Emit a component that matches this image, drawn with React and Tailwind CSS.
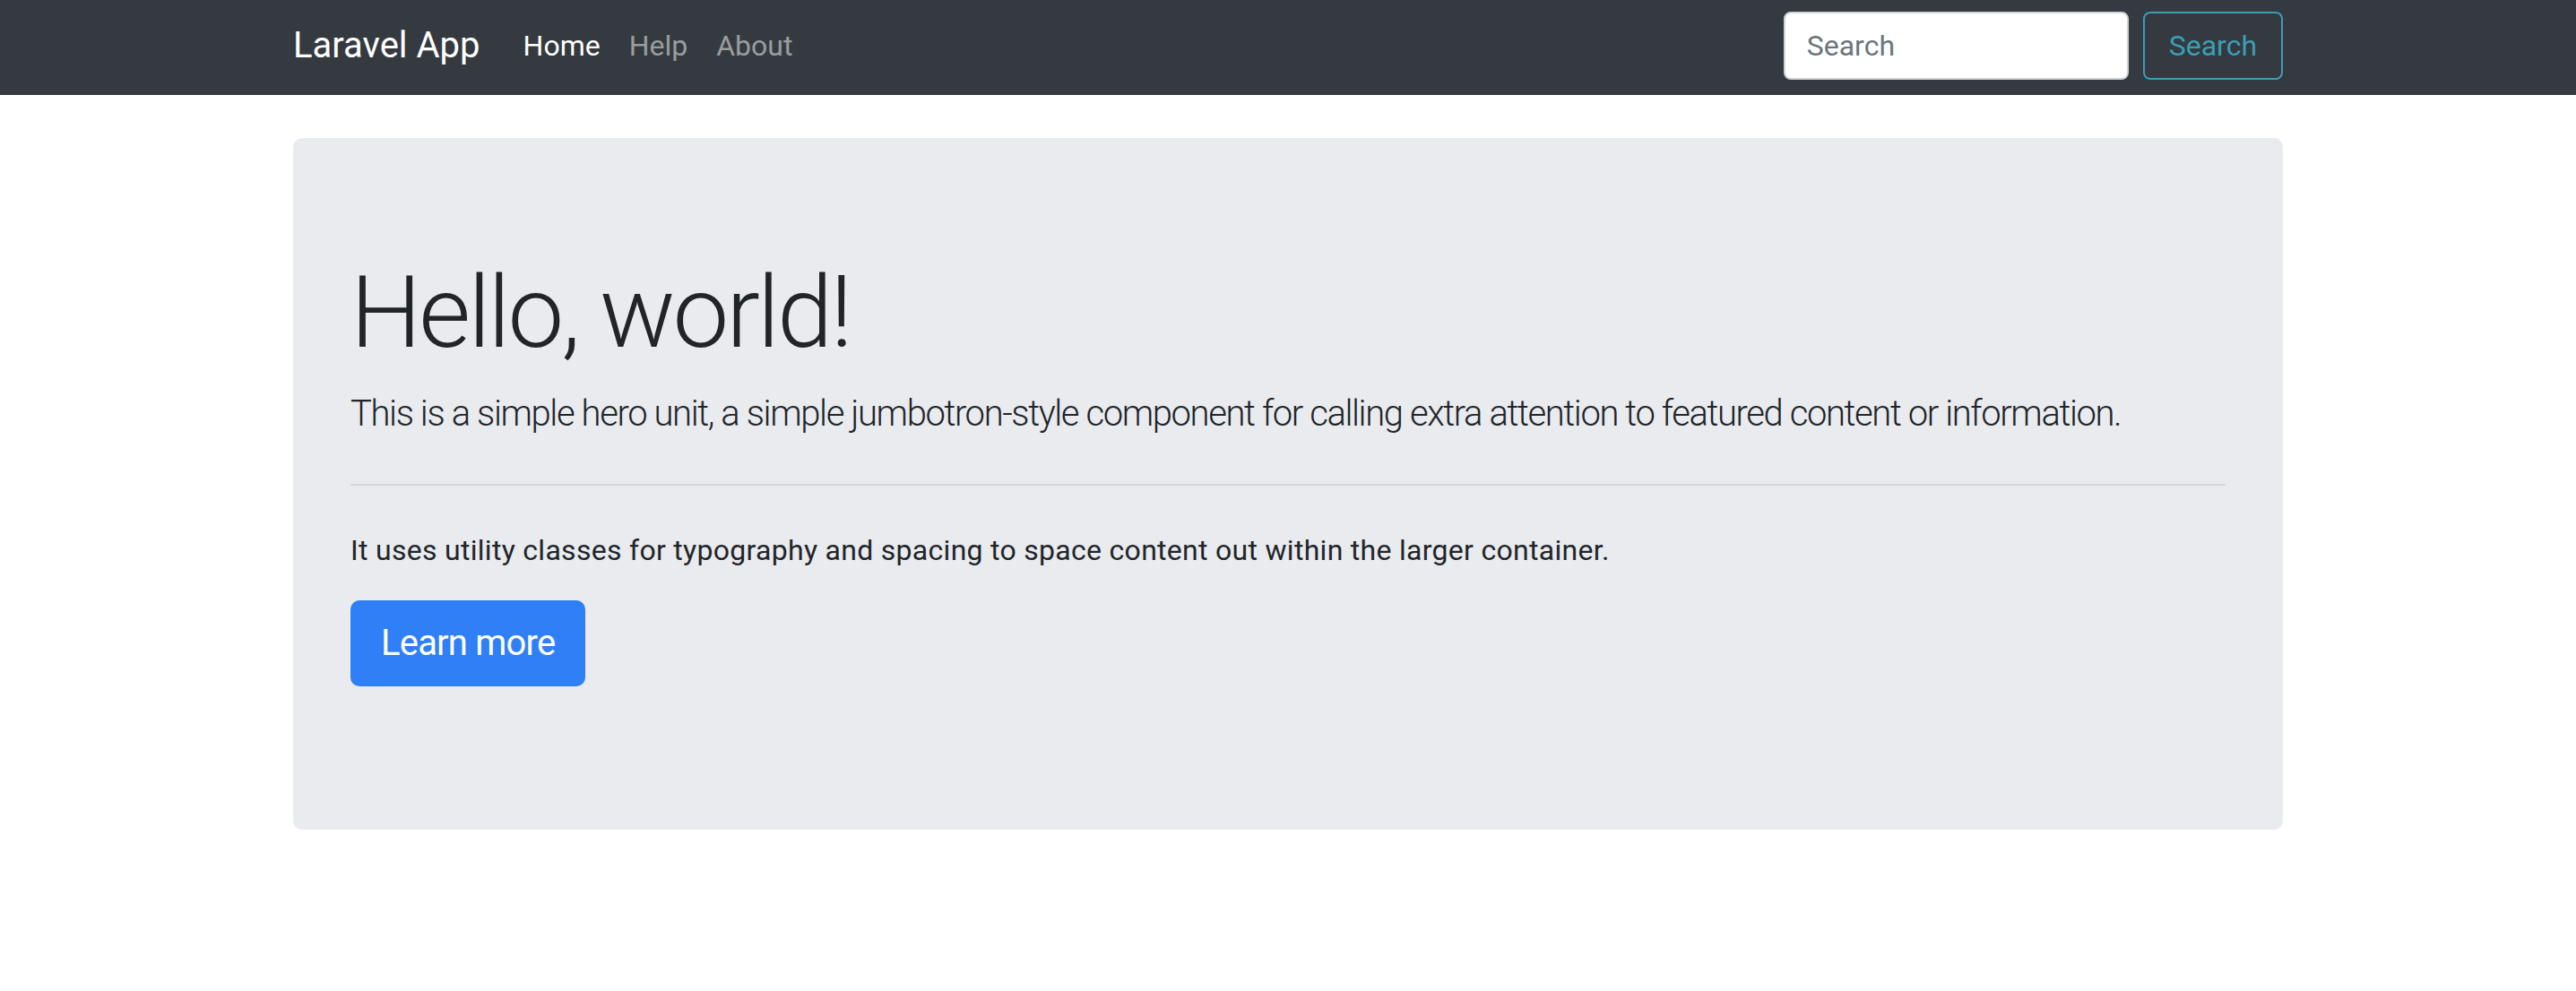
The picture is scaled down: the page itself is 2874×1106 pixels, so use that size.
import React from "react";

const navLinks = [
  { label: "Home", active: true },
  { label: "Help", active: false },
  { label: "About", active: false },
];

const Navbar = () => {
  return (
    <nav className="bg-[#343a40] h-[106px] pt-[13px]">
      <div className="mx-auto w-[2280px] px-[30px] flex items-start justify-between">
        <div className="flex items-center h-[76px]">
          <a href="#" className="text-white text-[40px] leading-[60px] mr-[32px]">
            Laravel App
          </a>
          <ul className="flex items-center">
            {navLinks.map((link) => (
              <li key={link.label}>
                <a
                  href="#"
                  className={`block px-[16px] text-[32px] leading-[48px] ${
                    link.active ? "text-white" : "text-white/50"
                  }`}
                >
                  {link.label}
                </a>
              </li>
            ))}
          </ul>
        </div>

        <form className="flex items-center" onSubmit={(e) => e.preventDefault()}>
          <input
            type="search"
            placeholder="Search"
            className="w-[385px] h-[76px] mr-[16px] bg-white border-2 border-[#ced4da] rounded-[8px] px-[24px] text-[32px] text-[#495057] placeholder:text-[#6c757d] outline-none"
          />
          <button
            type="submit"
            className="h-[76px] px-[27px] border-2 border-[#3a9fb4] rounded-[8px] text-[32px] text-[#3a9fb4] bg-transparent"
          >
            Search
          </button>
        </form>
      </div>
    </nav>
  );
};

const Jumbotron = () => {
  return (
    <div className="bg-[#e9ebef] rounded-[10px] pt-[128px] pb-[128px] pl-[64px] pr-[64px] text-[#212529]">
      <h1 className="text-[112px] leading-[1.2] font-light mb-[16px] tracking-[-0.027em]">
        Hello, world!
      </h1>
      <p className="text-[40px] leading-[60px] font-light mb-[48px] whitespace-nowrap tracking-[-0.035em]">
        This is a simple hero unit, a simple jumbotron-style component for calling extra attention to featured content or information.
      </p>
      <hr className="border-0 border-t-2 border-[#d5d7db] mb-[48px]" />
      <p className="text-[32px] leading-[48px] mb-[32px] tracking-[0.009em]">
        It uses utility classes for typography and spacing to space content out within the larger container.
      </p>
      <div className="mb-[32px]">
        <a
          href="#"
          className="inline-block h-[96px] px-[32px] py-[16px] text-[40px] leading-[60px] text-white bg-[#2f7ff6] border-2 border-[#2f7ff6] rounded-[10px] tracking-[-0.02em]"
        >
          Learn more
        </a>
      </div>
    </div>
  );
};

const App = () => {
  return (
    <div className="min-h-screen bg-white font-['Roboto','Noto_Sans',sans-serif]">
      <Navbar />
      <main className="mx-auto w-[2280px] px-[30px] pt-[48px]">
        <Jumbotron />
      </main>
    </div>
  );
};

export default App;
